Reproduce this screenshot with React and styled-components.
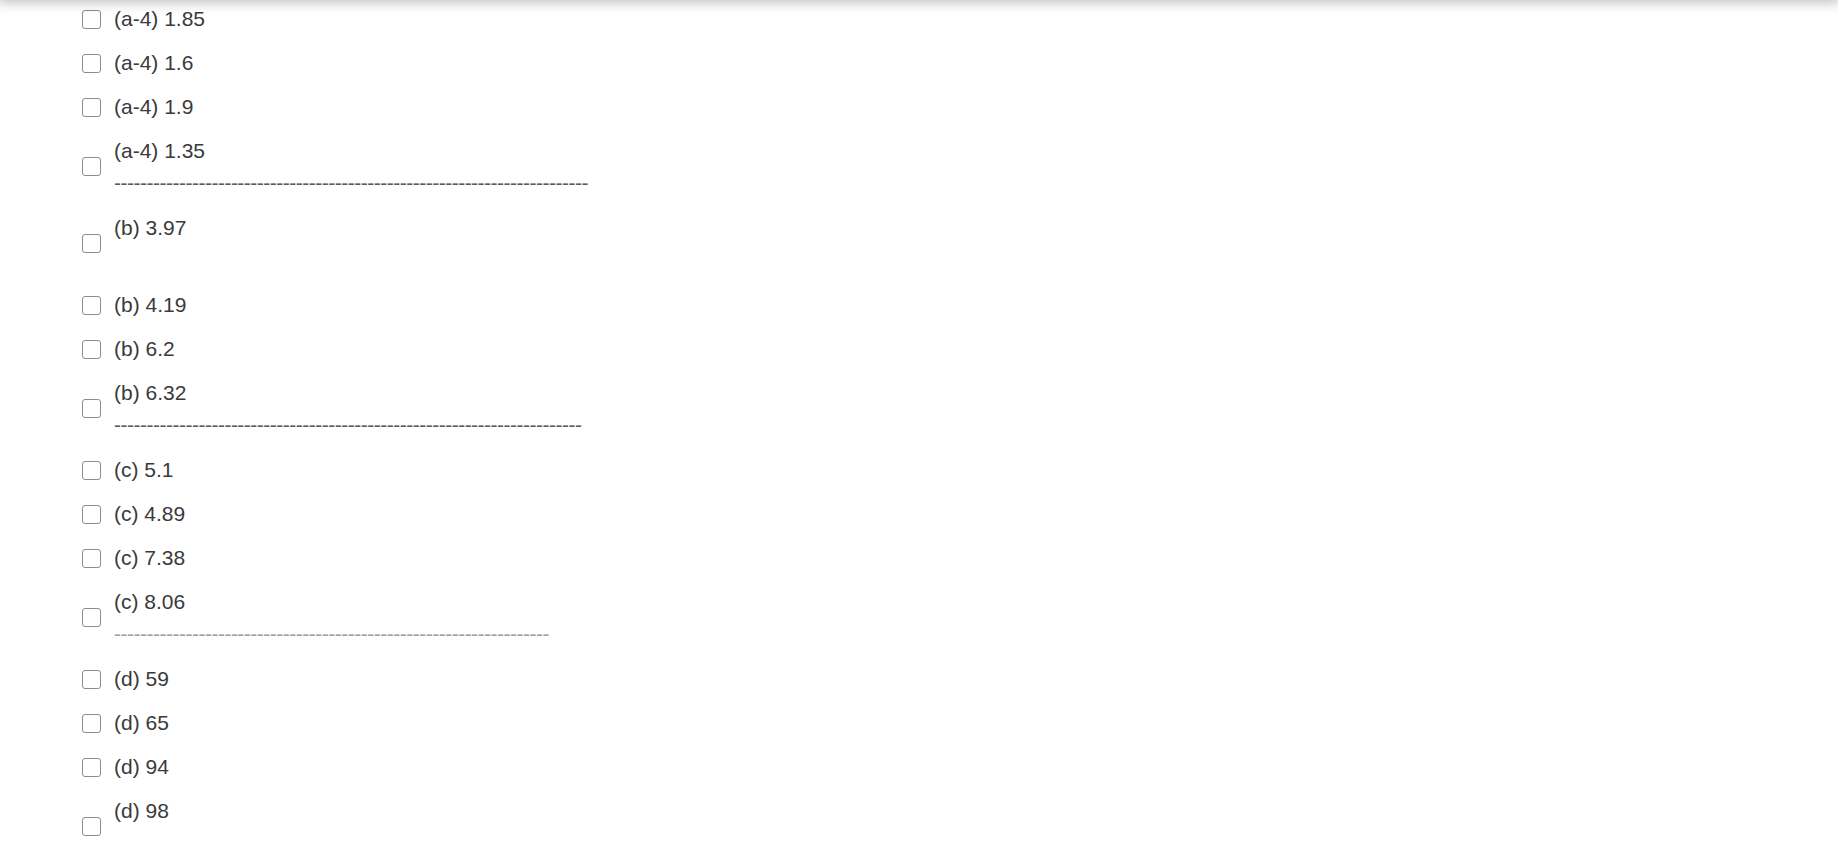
import React from "react";
import styled, { createGlobalStyle } from "styled-components";

const Global = createGlobalStyle`
  html, body {
    margin: 0;
    padding: 0;
    background: #ffffff;
  }
  body {
    font-family: "Liberation Sans", Arial, sans-serif;
    color: #3a3a3a;
  }
`;

const TopShadow = styled.div`
  position: fixed;
  top: -40px;
  left: 0;
  right: 0;
  height: 40px;
  background: #ffffff;
  box-shadow: 0 0 12px 2px rgba(0, 0, 0, 0.28);
  z-index: 10;
`;

const List = styled.div`
  display: flex;
  flex-direction: column;
  gap: 14px;
  padding: 4px 0 0 82px;
`;

const Option = styled.label`
  display: flex;
  align-items: center;
  gap: 13px;
  margin-bottom: ${(p) => (p.$multi ? "3px" : "0")};
  cursor: pointer;
`;

const Box = styled.input.attrs({ type: "checkbox" })`
  appearance: none;
  -webkit-appearance: none;
  flex: none;
  width: 19px;
  height: 19px;
  margin: 0;
  border: 1.5px solid #8c8c8c;
  border-radius: 3px;
  background: #ffffff;
`;

const Text = styled.div`
  display: flex;
  flex-direction: column;
  font-size: 21px;
  line-height: 30px;
  color: #3a3a3a;
  white-space: pre;
`;

const Line = styled.span`
  display: block;
  height: 30px;
`;

const Dashes = styled.span`
  display: block;
  height: 28px;
  padding-top: 2px;
  font-size: 21px;
  letter-spacing: -0.5px;
  color: ${(p) => p.$color};
`;

const groups = [
  {
    items: [["(a-4) 1.85"], ["(a-4) 1.6"], ["(a-4) 1.9"]],
    last: "(a-4) 1.35",
    dashes: 73,
    color: "#5a5a5a",
  },
  {
    items: [["(b) 3.97", true], ["(b) 4.19"], ["(b) 6.2"]],
    last: "(b) 6.32",
    dashes: 72,
    color: "#5a5a5a",
  },
  {
    items: [["(c) 5.1"], ["(c) 4.89"], ["(c) 7.38"]],
    last: "(c) 8.06",
    dashes: 67,
    color: "#a0a0a0",
  },
  {
    items: [["(d) 59"], ["(d) 65"], ["(d) 94"]],
    last: "(d) 98",
    dashes: 67,
    color: "#a0a0a0",
  },
];

export default function App() {
  return (
    <>
      <Global />
      <TopShadow />
      <List>
        {groups.map((g) => (
          <React.Fragment key={g.last}>
            {g.items.map(([t, blank]) => (
              <Option key={t} $multi={!!blank}>
                <Box />
                <Text>
                  <Line>{t}</Line>
                  {blank && <Line>{"\u00a0"}</Line>}
                </Text>
              </Option>
            ))}
            <Option $multi>
              <Box />
              <Text>
                <Line>{g.last}</Line>
                <Dashes $color={g.color}>{"-".repeat(g.dashes)}</Dashes>
              </Text>
            </Option>
          </React.Fragment>
        ))}
      </List>
    </>
  );
}
